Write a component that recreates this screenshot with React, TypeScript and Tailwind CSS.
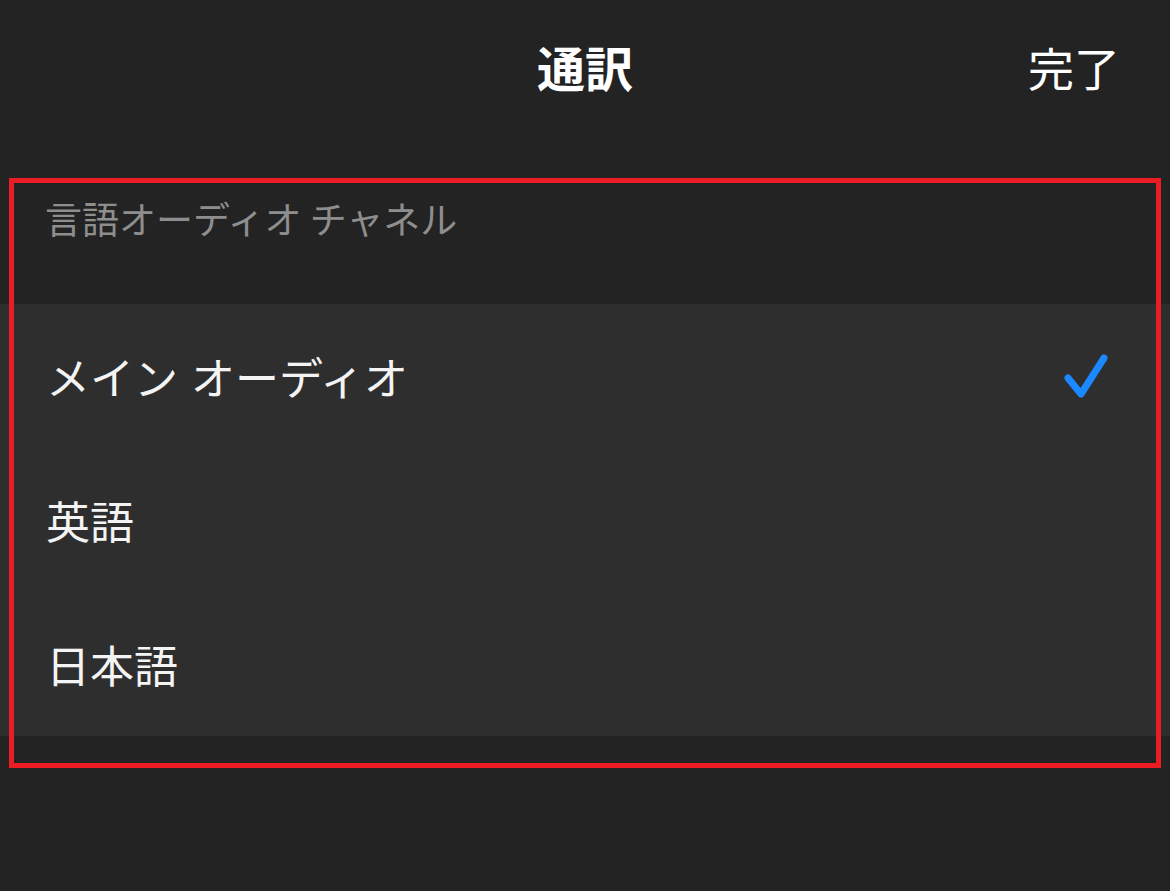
import React from "react";

const font = { fontFamily: '"Noto Sans CJK JP", "Noto Sans", sans-serif' };

function Check() {
  return (
    <svg width="50" height="50" viewBox="0 0 50 50" fill="none">
      <polyline
        points="8,27 21,43 44,7"
        stroke="#1a88ff"
        strokeWidth="7"
        strokeLinecap="round"
        strokeLinejoin="round"
      />
    </svg>
  );
}

export default function App() {
  const rows = [
    { label: ["メイン", "オーディオ"], checked: true },
    { label: ["英語"], checked: false },
    { label: ["日本語"], checked: false },
  ];
  return (
    <div
      className="relative w-[1170px] h-[891px] overflow-hidden bg-[#232323] font-['Noto_Sans_CJK_JP',sans-serif]"
      style={font}
    >
      {/* Navigation bar */}
      <div className="grid grid-cols-3 items-center h-[132px]">
        <div />
        <div className="flex justify-center">
          <span className="text-[48px] leading-none font-bold text-white">通訳</span>
        </div>
        <div className="flex justify-end pr-[50px]">
          <span className="text-[46px] leading-none text-white">完了</span>
        </div>
      </div>

      {/* Section header */}
      <div className="h-[172px] pl-[45px] pt-[68px]">
        <span className="text-[37px] leading-none text-[#8e8e8e]">言語オーディオ チャネル</span>
      </div>

      {/* List */}
      <div className="bg-[#2e2e2e]">
        {rows.map((r) => (
          <div key={r.label.join("")} className="h-[144px] flex items-center justify-between pl-[46px] pr-[60px]">
            <span className="flex gap-[13px] text-[44px] leading-none text-[#f4f4f4]">
              {r.label.map((t) => (
                <span key={t}>{t}</span>
              ))}
            </span>
            {r.checked ? <Check /> : null}
          </div>
        ))}
      </div>

      {/* Annotation box */}
      <div className="absolute left-[9px] top-[178px] w-[1152px] h-[590px] border-[5px] border-[#ec1c24] pointer-events-none" />
    </div>
  );
}
